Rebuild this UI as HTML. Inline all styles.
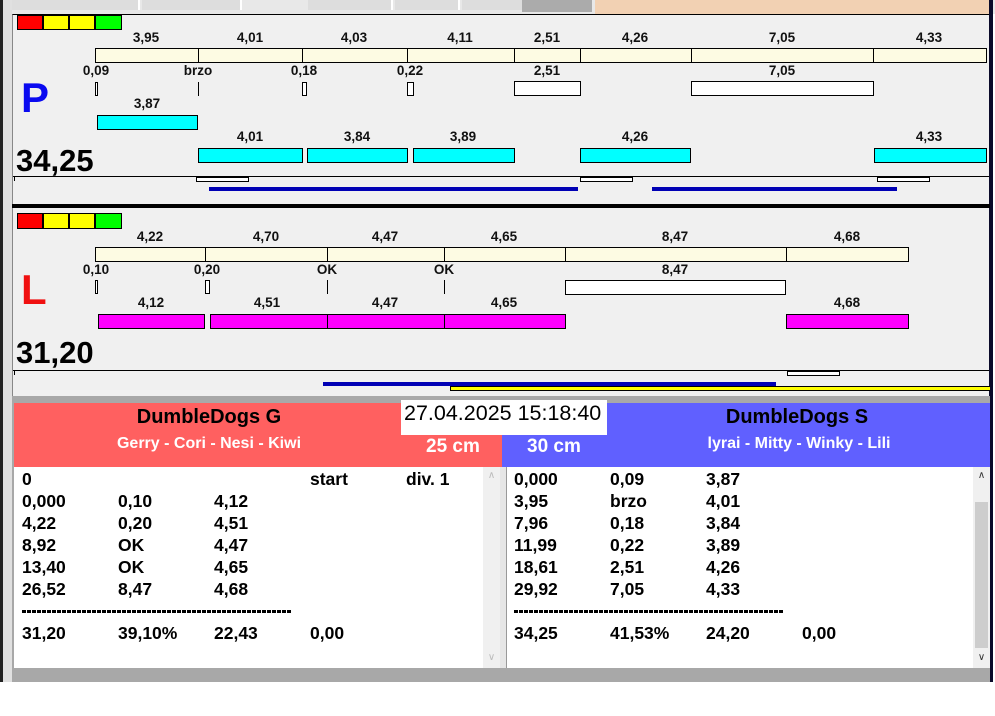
<!DOCTYPE html>
<html><head><meta charset="utf-8"><style>
*{margin:0;padding:0;box-sizing:border-box}
body{width:995px;height:716px;background:#fff;position:relative;overflow:hidden;font-family:"Liberation Sans",sans-serif}
div{position:absolute}
.cr{background:#fdfbe3;border:1px solid #000;height:15px}
.w{background:#fff;border:1px solid #000}
.cy{background:#00ffff;border:1px solid #000;height:15px}
.mg{background:#ff00ff;border:1px solid #000;height:15px}
.l{width:80px;text-align:center;font-weight:bold;font-size:13.5px;color:#111;line-height:14px}
.t{font-weight:bold;font-size:17.5px;color:#000;line-height:22px}
.tick{width:1px;background:#000}
.dash{height:3px;background:repeating-linear-gradient(90deg,#000 0 4px,transparent 4px 5px)}
</style></head><body>
<div style="left:0;top:0;width:995px;height:14px;background:#e8e8e8"></div>
<div style="left:10px;top:0;width:130px;height:10px;background:#ddd;border-right:2px solid #fff"></div>
<div style="left:142px;top:0;width:100px;height:10px;background:#ddd;border-right:2px solid #fff"></div>
<div style="left:308px;top:0;width:85px;height:10px;background:#ddd;border-right:2px solid #fff"></div>
<div style="left:395px;top:0;width:65px;height:10px;background:#ddd;border-right:2px solid #fff"></div>
<div style="left:462px;top:0;width:60px;height:10px;background:#ddd"></div>
<div style="left:522px;top:0;width:70px;height:12px;background:#ababab"></div>
<div style="left:595px;top:0;width:395px;height:14px;background:#f2d1b3"></div>
<div style="left:0;top:0;width:3px;height:682px;background:#222"></div>
<div style="left:3px;top:0;width:9px;height:682px;background:#e0e0e0"></div>
<div style="left:12px;top:14px;width:978px;height:384px;background:#f0f0f0;border-top:1px solid #000;border-left:1px solid #888"></div>
<div style="left:989px;top:0;width:4px;height:682px;background:#0a0a2a"></div>

<div style="left:17px;top:15px;width:26px;height:15px;background:#f00;border:1px solid #000"></div>
<div style="left:43px;top:15px;width:26px;height:15px;background:#ff0;border:1px solid #000"></div>
<div style="left:69px;top:15px;width:26px;height:15px;background:#ff0;border:1px solid #000"></div>
<div style="left:95px;top:15px;width:27px;height:15px;background:#0f0;border:1px solid #000"></div>

<div class="cr" style="left:95px;top:48px;width:104px"></div>
<div class="cr" style="left:198px;top:48px;width:105px"></div>
<div class="cr" style="left:302px;top:48px;width:106px"></div>
<div class="cr" style="left:407px;top:48px;width:108px"></div>
<div class="cr" style="left:514px;top:48px;width:67px"></div>
<div class="cr" style="left:580px;top:48px;width:112px"></div>
<div class="cr" style="left:691px;top:48px;width:183px"></div>
<div class="cr" style="left:873px;top:48px;width:114px"></div>
<div class="l" style="left:106px;top:31px">3,95</div>
<div class="l" style="left:210px;top:31px">4,01</div>
<div class="l" style="left:314px;top:31px">4,03</div>
<div class="l" style="left:420px;top:31px">4,11</div>
<div class="l" style="left:507px;top:31px">2,51</div>
<div class="l" style="left:595px;top:31px">4,26</div>
<div class="l" style="left:742px;top:31px">7,05</div>
<div class="l" style="left:889px;top:31px">4,33</div>

<div class="l" style="left:56px;top:64px">0,09</div>
<div class="l" style="left:158px;top:64px">brzo</div>
<div class="l" style="left:264px;top:64px">0,18</div>
<div class="l" style="left:370px;top:64px">0,22</div>
<div class="l" style="left:507px;top:64px">2,51</div>
<div class="l" style="left:742px;top:64px">7,05</div>
<div class="w" style="left:95px;top:82px;width:3px;height:14px"></div>
<div class="tick" style="left:198px;top:82px;height:14px"></div>
<div class="w" style="left:302px;top:82px;width:5px;height:14px"></div>
<div class="w" style="left:407px;top:82px;width:7px;height:14px"></div>
<div class="w" style="left:514px;top:81px;width:67px;height:15px"></div>
<div class="w" style="left:691px;top:81px;width:183px;height:15px"></div>
<div style="left:21px;top:76px;font-size:42px;font-weight:bold;color:#0a0af0;line-height:44px">P</div>
<div class="l" style="left:107px;top:97px">3,87</div>
<div class="cy" style="left:97px;top:115px;width:101px"></div>
<div class="l" style="left:210px;top:130px">4,01</div>
<div class="l" style="left:317px;top:130px">3,84</div>
<div class="l" style="left:423px;top:130px">3,89</div>
<div class="l" style="left:595px;top:130px">4,26</div>
<div class="l" style="left:889px;top:130px">4,33</div>
<div class="cy" style="left:198px;top:148px;width:105px"></div>
<div class="cy" style="left:307px;top:148px;width:101px"></div>
<div class="cy" style="left:413px;top:148px;width:102px"></div>
<div class="cy" style="left:580px;top:148px;width:111px"></div>
<div class="cy" style="left:874px;top:148px;width:113px"></div>
<div style="left:16px;top:144px;font-size:31px;font-weight:bold;color:#000;line-height:34px">34,25</div>
<div style="left:13px;top:176px;width:976px;height:1px;background:#000"></div>
<div class="tick" style="left:14px;top:177px;height:4px"></div>
<div class="w" style="left:196px;top:177px;width:53px;height:5px"></div>
<div class="w" style="left:580px;top:177px;width:53px;height:5px"></div>
<div class="w" style="left:877px;top:177px;width:53px;height:5px"></div>
<div style="left:209px;top:187px;width:369px;height:4px;background:#0000b4"></div>
<div style="left:652px;top:187px;width:245px;height:4px;background:#0000b4"></div>

<div style="left:12px;top:204px;width:978px;height:4px;background:#000"></div>

<div style="left:17px;top:213px;width:26px;height:16px;background:#f00;border:1px solid #000"></div>
<div style="left:43px;top:213px;width:26px;height:16px;background:#ff0;border:1px solid #000"></div>
<div style="left:69px;top:213px;width:26px;height:16px;background:#ff0;border:1px solid #000"></div>
<div style="left:95px;top:213px;width:27px;height:16px;background:#0f0;border:1px solid #000"></div>
<div class="cr" style="left:95px;top:247px;width:111px"></div>
<div class="cr" style="left:205px;top:247px;width:123px"></div>
<div class="cr" style="left:327px;top:247px;width:118px"></div>
<div class="cr" style="left:444px;top:247px;width:122px"></div>
<div class="cr" style="left:565px;top:247px;width:222px"></div>
<div class="cr" style="left:786px;top:247px;width:123px"></div>
<div class="l" style="left:110px;top:230px">4,22</div>
<div class="l" style="left:226px;top:230px">4,70</div>
<div class="l" style="left:345px;top:230px">4,47</div>
<div class="l" style="left:464px;top:230px">4,65</div>
<div class="l" style="left:635px;top:230px">8,47</div>
<div class="l" style="left:807px;top:230px">4,68</div>
<div class="l" style="left:56px;top:263px">0,10</div>
<div class="l" style="left:167px;top:263px">0,20</div>
<div class="l" style="left:287px;top:263px">OK</div>
<div class="l" style="left:404px;top:263px">OK</div>
<div class="l" style="left:635px;top:263px">8,47</div>
<div class="w" style="left:95px;top:280px;width:3px;height:14px"></div>
<div class="w" style="left:205px;top:280px;width:5px;height:14px"></div>
<div class="tick" style="left:327px;top:280px;height:14px"></div>
<div class="tick" style="left:444px;top:280px;height:14px"></div>
<div class="w" style="left:565px;top:280px;width:221px;height:15px"></div>
<div style="left:21px;top:268px;font-size:42px;font-weight:bold;color:#f01010;line-height:44px">L</div>
<div class="l" style="left:111px;top:296px">4,12</div>
<div class="l" style="left:227px;top:296px">4,51</div>
<div class="l" style="left:345px;top:296px">4,47</div>
<div class="l" style="left:464px;top:296px">4,65</div>
<div class="l" style="left:807px;top:296px">4,68</div>
<div class="mg" style="left:98px;top:314px;width:107px"></div>
<div class="mg" style="left:210px;top:314px;width:118px"></div>
<div class="mg" style="left:327px;top:314px;width:118px"></div>
<div class="mg" style="left:444px;top:314px;width:122px"></div>
<div class="mg" style="left:786px;top:314px;width:123px"></div>
<div style="left:16px;top:336px;font-size:31px;font-weight:bold;color:#000;line-height:34px">31,20</div>
<div style="left:13px;top:370px;width:976px;height:1px;background:#000"></div>
<div class="tick" style="left:14px;top:371px;height:4px"></div>
<div class="w" style="left:787px;top:371px;width:53px;height:5px"></div>
<div style="left:323px;top:382px;width:453px;height:4px;background:#0000b4"></div>
<div style="left:450px;top:386px;width:540px;height:5px;background:#ffff00;border:1px solid #000;border-right:none"></div>

<div style="left:12px;top:396px;width:978px;height:286px;background:#a8a8a8"></div>
<div style="left:14px;top:403px;width:488px;height:64px;background:#ff6060"></div>
<div style="left:502px;top:403px;width:488px;height:64px;background:#6060ff"></div>
<div style="left:14px;top:405px;width:390px;text-align:center;font-size:20px;font-weight:bold;line-height:24px">DumbleDogs G</div>
<div style="left:14px;top:434px;width:390px;text-align:center;font-size:16px;font-weight:bold;color:#fff;line-height:20px">Gerry - Cori - Nesi - Kiwi</div>
<div style="left:426px;top:436px;font-size:19px;font-weight:bold;color:#fff;line-height:22px">25 cm</div>
<div style="left:527px;top:436px;font-size:19px;font-weight:bold;color:#fff;line-height:22px">30 cm</div>
<div style="left:600px;top:405px;width:394px;text-align:center;font-size:20px;font-weight:bold;line-height:24px">DumbleDogs S</div>
<div style="left:600px;top:434px;width:398px;text-align:center;font-size:16px;font-weight:bold;color:#fff;line-height:20px">lyrai - Mitty - Winky - Lili</div>
<div style="left:401px;top:400px;width:206px;height:35px;background:#fff;font-size:21.5px;line-height:24px;padding-left:3px;padding-top:1px;white-space:nowrap">27.04.2025 15:18:40</div>

<div style="left:14px;top:467px;width:486px;height:201px;background:#fff;border-right:1px solid #ccc"></div>
<div style="left:483px;top:467px;width:17px;height:201px;background:#f0f0f0"></div>
<div style="left:484px;top:470px;width:15px;font-size:10px;color:#bbb;text-align:center">&#8743;</div>
<div style="left:484px;top:652px;width:15px;font-size:10px;color:#bbb;text-align:center">&#8744;</div>
<div style="left:500px;top:467px;width:7px;height:201px;background:#e6e6e6;border-right:1px solid #999"></div>
<div style="left:507px;top:467px;width:483px;height:201px;background:#fff"></div>
<div style="left:973px;top:467px;width:17px;height:201px;background:#f0f0f0"></div>
<div style="left:975px;top:502px;width:13px;height:146px;background:#cdcdcd"></div>
<div style="left:974px;top:470px;width:15px;font-size:10px;color:#333;text-align:center">&#8743;</div>
<div style="left:974px;top:652px;width:15px;font-size:10px;color:#333;text-align:center">&#8744;</div>

<div class="t" style="left:22px;top:468px">0</div>
<div class="t" style="left:310px;top:468px">start</div>
<div class="t" style="left:406px;top:468px">div. 1</div>
<div class="t" style="left:22px;top:490px">0,000<br>4,22<br>8,92<br>13,40<br>26,52</div>
<div class="t" style="left:118px;top:490px">0,10<br>0,20<br>OK<br>OK<br>8,47</div>
<div class="t" style="left:214px;top:490px">4,12<br>4,51<br>4,47<br>4,65<br>4,68</div>
<div class="dash" style="left:22px;top:610px;width:270px"></div>
<div class="t" style="left:22px;top:622px">31,20</div>
<div class="t" style="left:118px;top:622px">39,10%</div>
<div class="t" style="left:214px;top:622px">22,43</div>
<div class="t" style="left:310px;top:622px">0,00</div>

<div class="t" style="left:514px;top:468px">0,000<br>3,95<br>7,96<br>11,99<br>18,61<br>29,92</div>
<div class="t" style="left:610px;top:468px">0,09<br>brzo<br>0,18<br>0,22<br>2,51<br>7,05</div>
<div class="t" style="left:706px;top:468px">3,87<br>4,01<br>3,84<br>3,89<br>4,26<br>4,33</div>
<div class="dash" style="left:514px;top:610px;width:270px"></div>
<div class="t" style="left:514px;top:622px">34,25</div>
<div class="t" style="left:610px;top:622px">41,53%</div>
<div class="t" style="left:706px;top:622px">24,20</div>
<div class="t" style="left:802px;top:622px">0,00</div>
<div style="left:0;top:682px;width:995px;height:34px;background:#fff"></div>
</body></html>
